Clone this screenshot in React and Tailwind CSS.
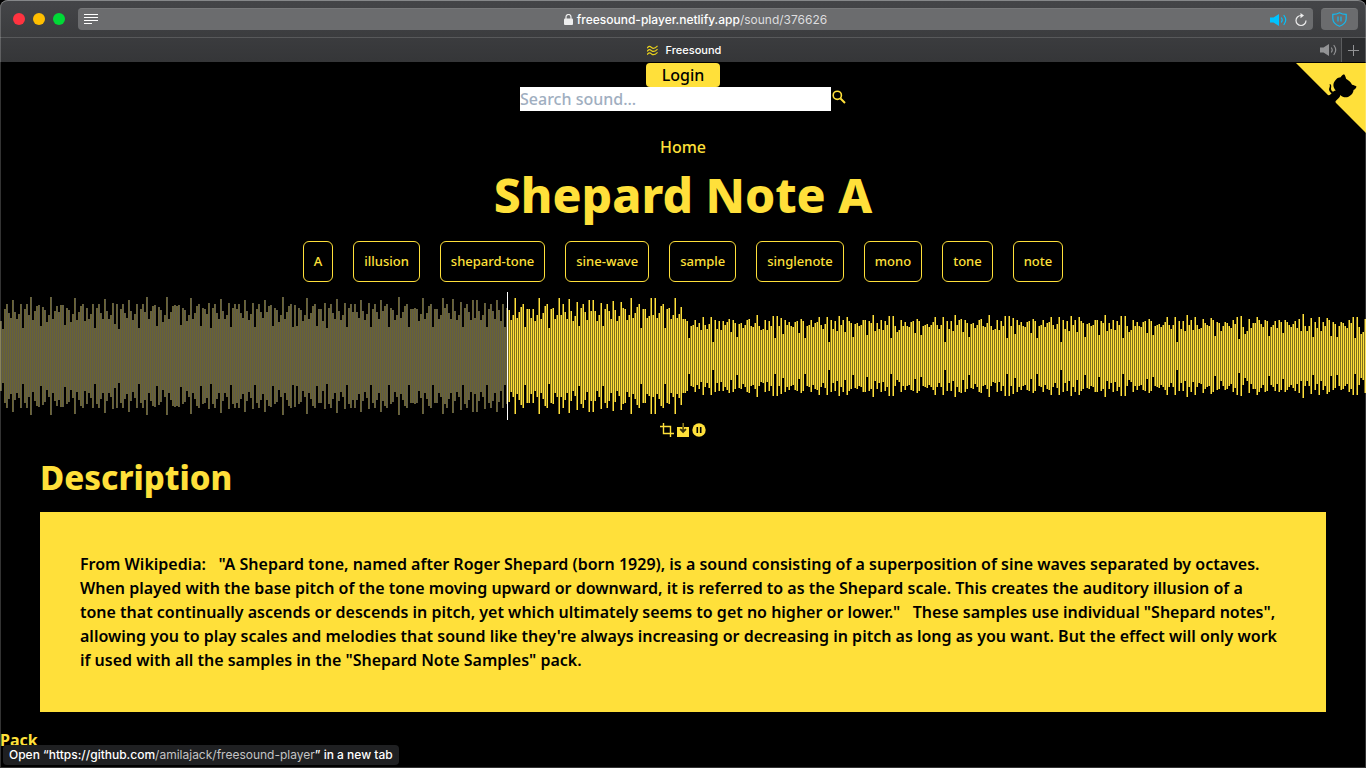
import React from "react";

const LOUD = [
  35,27,47,52,43,38,56,44,37,42,52,28,47,52,41,59,36,45,50,51,30,49,46,34,41,59,37,45,50,44,51,51,31,48,46,34,42,58,36,44,50,52,35,48,37,42,52,28,48,52,
  43,37,57,45,37,41,53,32,52,27,47,52,43,38,56,45,36,42,52,28,47,52,44,59,37,45,50,51,30,49,46,34,41,59,37,44,50,51,50,51,31,48,46,35,41,58,37,43,50,52,
  30,48,47,42,53,28,48,52,43,37,57,45,37,41,53,29,48,52,47,52,43,38,56,45,36,42,53,29,47,52,44,38,56,44,50,51,30,48,46,34,41,59,37,44,50,52,29,51,30,48,
  46,35,41,58,37,43,50,52,30,47,47,35,53,28,48,52,43,37,57,45,36,41,53,29,48,52,44,52,44,38,56,45,36,42,53,29,47,52,44,37,56,45,50,52,29,48,46,36,41,59,
  38,44,50,52,29,47,47,48,47,35,42,58,37,43,50,52,29,47,47,37,41,58,48,52,43,
  37,57,45,36,41,54,29,48,52,44,36,56,38,56,45,36,41,53,29,47,52,45,37,56,46,35,52,29,48,46,36,41,58,38,44,49,52,29,47,47,38,47,35,41,58,37,43,50,52,28,
  47,48,37,41,58,41,52,44,37,57,45,35,40,54,30,48,52,44,36,56,45,56,45,35,41,53,30,47,52,45,37,55,46,35,40,54,48,47,36,41,58,38,43,49,52,28,47,47,38,40,
  58,41,58,38,43,50,52,28,47,48,37,41,58,38,42,49,37,37,35,18,30,31,36,29,33,
];

const QUIET = [
  26,39,31,27,32,39,14,36,27,35,26,35,31,34,37,24,36,33,19,32,33,28,31,36,37,30,29,33,41,30,26,27,36,26,35,30,40,18,40,30,38,22,36,31,34,30,29,34,35,23,
  37,35,18,30,31,36,29,33,34,39,31,27,32,39,14,36,27,35,25,40,31,36,24,39,35,33,19,32,33,30,31,36,36,21,35,33,41,25,33,27,36,26,35,31,40,18,40,30,24,26,
  36,30,34,30,29,34,35,23,37,35,21,30,31,32,29,31,34,39,31,27,31,39,14,35,27,35,25,41,31,36,
];

const TAIL = [
  28,37,33,31,30,38,36,20,34,33,25,30,34,33,30,28,36,32,39,17,40,29,22,25,37,28,33,33,39,36,32,29,36,35,20,29,31,35,28,36,34,23,36,34,31,29,32,35,28,37,
  25,42,30,25,30,38,19,34,28,39,25,34,30,38,36,20,34,32,19,30,34,33,30,28,36,33,39,18,39,29,22,24,37,
];

const MIDDLE = Array.from({ length: 120 }, (_, i) => QUIET[(i + 14) % 130]);
const PEAKS = [...LOUD, ...QUIET, ...MIDDLE, ...TAIL];
const PLAYED = 254;

const column = (from, to, shift) =>
  PEAKS.slice(from, to)
    .map((h, i) => `M${(from + i) * 2 + shift} ${64 - h}h1v${h * 2}h-1z`)
    .join("");

function Waveform() {
  return (
    <svg className="block h-32 w-full" viewBox="0 0 1366 128" preserveAspectRatio="none" shapeRendering="crispEdges" role="img" aria-label="Waveform">
      <path d={column(0, PLAYED, 0)} fill="#6b6431" />
      <path d={column(0, PLAYED, 1)} fill="#5e5b4b" />
      <path d={column(PLAYED, PEAKS.length, 0)} fill="#80701d" />
      <path d={column(PLAYED, PEAKS.length, 1)} fill="#ffe03a" />
      <rect x="507" y="0" width="1" height="128" fill="#fff" />
    </svg>
  );
}

function Speaker({ className }) {
  return (
    <svg className={className} viewBox="0 0 17 12" fill="none" stroke="currentColor" strokeWidth="1.2" strokeLinecap="round" aria-hidden="true">
      <path d="M0 3.500h3.500L9 0v12L3.500 8.500H0z" fill="currentColor" stroke="none" />
      <path d="M11.500 4q1.400 2 0 4M14 1.500q3.400 4.500 0 9" />
    </svg>
  );
}

function BrowserBar() {
  return (
    <header className="shrink-0 rounded-t-lg border-t border-[#858789] bg-linear-to-b from-[#444548] to-[#353638] font-['Inter',sans-serif] text-white">
      <div className="flex h-9 items-center gap-2 px-2">
        <div className="flex w-[62px] justify-center gap-2">
          <button aria-label="Close" className="size-3 rounded-full bg-[#ff3340]" />
          <button aria-label="Minimize" className="size-3 rounded-full bg-[#ffbf00]" />
          <button aria-label="Zoom" className="size-3 rounded-full bg-[#00d936]" />
        </div>
        <div className="flex h-[22px] flex-1 items-center rounded border-t border-[#77787a] bg-[#6b6c6e] px-[6px]">
          <div className="flex w-12">
            <button aria-label="Reader view">
              <svg className="h-[11px] w-[14px]" viewBox="0 0 14 11" fill="#fff" aria-hidden="true">
                <path d="M0 0h14v1H0zM0 3h14v1H0zM0 6h14v1H0zM0 9h8v1H0z" />
              </svg>
            </button>
          </div>
          <div className="flex flex-1 items-center justify-center gap-1 text-xs font-medium">
            <svg className="h-[11px] w-[9px]" viewBox="0 0 9 11" aria-hidden="true">
              <rect y="4.500" width="9" height="6.500" rx="1" fill="#eee" />
              <path d="M2 5V3a2.500 2.500 0 0 1 5 0v2" fill="none" stroke="#eee" strokeWidth="1.2" />
            </svg>
            <span>freesound-player.netlify.app<span className="font-normal text-[#dddddf]">/sound/376626</span></span>
          </div>
          <div className="flex w-12 items-center justify-end gap-2">
            <button aria-label="Mute page"><Speaker className="h-3 w-[17px] text-[#00c3ff]" /></button>
            <button aria-label="Reload">
              <svg className="h-[14px] w-3" viewBox="0 0 12 14" fill="none" stroke="#eee" strokeWidth="1.200" aria-hidden="true">
                <path d="M6 2.500a5 5 0 1 0 5 5" />
                <path d="M5.500 0l3.500 2.500-3.500 2.800z" fill="#eee" stroke="none" />
              </svg>
            </button>
          </div>
        </div>
        <button aria-label="Content blocker" className="flex h-[22px] w-[37px] items-center justify-center rounded border-t border-[#77787a] bg-[#6b6c6e]">
          <svg className="size-[15px]" viewBox="0 0 15 15" fill="none" stroke="#12b9f0" strokeWidth="1.200" aria-hidden="true">
            <path d="M7.500.7C5.500 1.900 3 2.300.8 2.300v4.200c0 4 3.200 6.500 6.700 7.800 3.500-1.300 6.700-3.800 6.700-7.800V2.300C12 2.300 9.500 1.900 7.500.7z" />
            <path d="M6 4.500v5M9 4.500v5" />
          </svg>
        </button>
      </div>
      <div className="flex h-[25px] items-stretch border-t border-[#58595b] pr-px">
        <div className="w-12" />
        <div className="flex flex-1 items-center justify-center gap-2 text-[11px] font-medium">
          <svg className="h-[11px] w-[11px]" viewBox="0 0 12 11" fill="none" stroke="#e8d01c" strokeWidth="1.300" aria-hidden="true">
            <path d="M0 3C2.500 0 3.500 1 5 2.300S8.500 3.500 11.500.5M0 6.500C2.500 3.500 3.500 4.500 5 5.800S8.500 7 11.500 4M0 10C2.500 7 3.500 8 5 9.300S8.500 10.500 11.500 7.500" />
          </svg>
          <span>Freesound</span>
        </div>
        <div className="flex items-center gap-1">
          <button aria-label="Mute tab"><Speaker className="h-3 w-[17px] text-[#929395]" /></button>
          <button aria-label="New tab" className="flex h-full w-6 items-center justify-center border-l border-[#5b5c5e] bg-[#2b2c2e]">
            <svg className="size-[11px]" viewBox="0 0 11 11" fill="#929395" aria-hidden="true"><path d="M5 0h1v11H5zM0 5h11v1H0z" /></svg>
          </button>
        </div>
      </div>
    </header>
  );
}

function GithubCorner() {
  return (
    <a href="https://github.com/amilajack/freesound-player" aria-label="View source on GitHub" className="absolute top-px right-0">
      <svg className="block size-[70px]" viewBox="0 0 250 250" aria-hidden="true">
        <path fill="#ffe03a" d="M0,0 L115,115 L130,115 L142,142 L250,250 L250,0 Z" />
        <path d="M128.3,109.0 C113.8,99.7 119.0,89.6 119.0,89.6 C122.0,82.7 120.5,78.6 120.5,78.6 C119.2,72.0 123.4,76.3 123.4,76.3 C127.3,80.9 125.5,87.3 125.5,87.3 C122.9,97.6 130.6,101.9 134.4,103.2" />
        <path d="M115.0,115.0 C114.9,115.1 118.7,116.5 119.8,115.4 L133.7,101.6 C136.9,99.2 139.9,98.4 142.2,98.6 C133.8,88.0 127.5,74.4 143.8,58.0 C148.5,53.4 154.0,51.2 159.7,51.0 C160.3,49.4 163.2,43.6 171.4,40.1 C171.4,40.1 176.1,42.5 178.8,56.2 C183.1,58.6 187.2,61.8 190.9,65.4 C194.5,69.0 197.7,73.2 200.1,77.6 C213.8,80.2 216.3,84.9 216.3,84.9 C212.7,93.1 206.9,96.0 205.4,96.6 C205.1,102.4 203.0,107.8 198.3,112.5 C181.9,128.9 168.3,122.5 157.7,114.1 C157.9,116.9 156.7,120.9 152.7,124.9 L141.0,136.5 C139.8,137.7 141.6,141.9 141.8,141.8 Z" />
      </svg>
    </a>
  );
}

const TAGS = ["A", "illusion", "shepard-tone", "sine-wave", "sample", "singlenote", "mono", "tone", "note"];

export default function App() {
  return (
    <div className="relative flex h-screen flex-col overflow-hidden bg-black">
      <BrowserBar />
      <main className="relative flex-1 overflow-hidden pt-px font-['Noto_Sans',sans-serif] text-base leading-6 font-medium text-[#ffe03a]">
        <GithubCorner />
        <div className="flex flex-col items-center">
          <button className="h-6 rounded bg-[#ffe03a] px-4 text-black">Login</button>
          <form className="flex h-6 items-start">
            <input type="text" aria-label="Search sound" placeholder="Search sound..." className="h-6 w-[311px] bg-white text-black placeholder:text-[#a0aec0]" />
            <button type="button" aria-label="Search" className="pt-[3px] pl-px">
              <svg className="size-[14px]" viewBox="0 0 14 14" fill="none" stroke="currentColor" aria-hidden="true">
                <circle cx="5.300" cy="5.300" r="4.100" strokeWidth="1.600" />
                <path d="M8.500 8.500l4.500 4.500" strokeWidth="2" />
              </svg>
            </button>
          </form>
          <a href="#home" className="mt-6">Home</a>
          <h1 className="text-5xl leading-[72px] font-extrabold">Shepard Note A</h1>
          <ul className="my-[10px] flex gap-5 text-[13px] leading-[19px]">
            {TAGS.map((t) => (
              <li key={t}>
                <a href={`#${t}`} className="block rounded-md border border-[#ffe03a] p-[10px]">{t}</a>
              </li>
            ))}
          </ul>
        </div>
        <Waveform />
        <div className="flex h-5 items-center justify-center gap-[2px]">
          <button aria-label="Crop">
            <svg className="size-[14px]" viewBox="0 0 14 14" fill="none" stroke="currentColor" strokeWidth="1.400" aria-hidden="true">
              <path d="M3.500 0v10.500H14M0 3.500h10.500V14" />
            </svg>
          </button>
          <button aria-label="Download">
            <svg className="size-[14px]" viewBox="0 0 14 14" aria-hidden="true">
              <path d="M1 4h12v10H1z" fill="currentColor" />
              <path d="M6.500 0h1.400v4H6.500z" fill="#9d8a20" />
              <path d="M6.400 4h1.400v2.500l2-1 .7 1.200-3.400 3.600-3.400-3.600.7-1.200 2 1z" fill="#3a330a" />
            </svg>
          </button>
          <button aria-label="Pause">
            <svg className="size-[14px]" viewBox="0 0 14 14" aria-hidden="true">
              <circle cx="7" cy="7" r="6.700" fill="currentColor" />
              <path d="M4.500 4h1.600v6H4.500zM7.900 4h1.600v6H7.900z" fill="#000" />
            </svg>
          </button>
        </div>
        <section className="px-10">
          <h2 className="mt-[14px] mb-[10px] text-[33px] leading-[48px] font-extrabold">Description</h2>
          <p className="bg-[#ffe03a] p-10 font-semibold text-black">
            From Wikipedia:&nbsp;&nbsp; "A Shepard tone, named after Roger Shepard (born 1929), is a sound consisting of a superposition of sine waves separated by octaves.{" "}
            <br className="hidden xl:inline" />
            When played with the base pitch of the tone moving upward or downward, it is referred to as the Shepard scale. This creates the auditory illusion of a{" "}
            <br className="hidden xl:inline" />
            tone that continually ascends or descends in pitch, yet which ultimately seems to get no higher or lower."&nbsp;&nbsp; These samples use individual "Shepard notes",{" "}
            <br className="hidden xl:inline" />
            allowing you to play scales and melodies that sound like they're always increasing or decreasing in pitch as long as you want. But the effect will only work{" "}
            <br className="hidden xl:inline" />
            if used with all the samples in the "Shepard Note Samples" pack.
          </p>
        </section>
        <h3 className="mt-4 font-bold">Pack</h3>
      </main>
      <div role="status" className="absolute bottom-[3px] left-[3px] rounded bg-[#1f2022] px-[6px] font-['Inter',sans-serif] text-xs leading-5 font-medium text-white">
        Open “https://github.com<span className="font-normal text-[#c4c4c5]">/amilajack/freesound-player</span>” in a new tab
      </div>
      <div className="pointer-events-none absolute inset-0 rounded-t-lg border-x border-b border-white/20" />
    </div>
  );
}
